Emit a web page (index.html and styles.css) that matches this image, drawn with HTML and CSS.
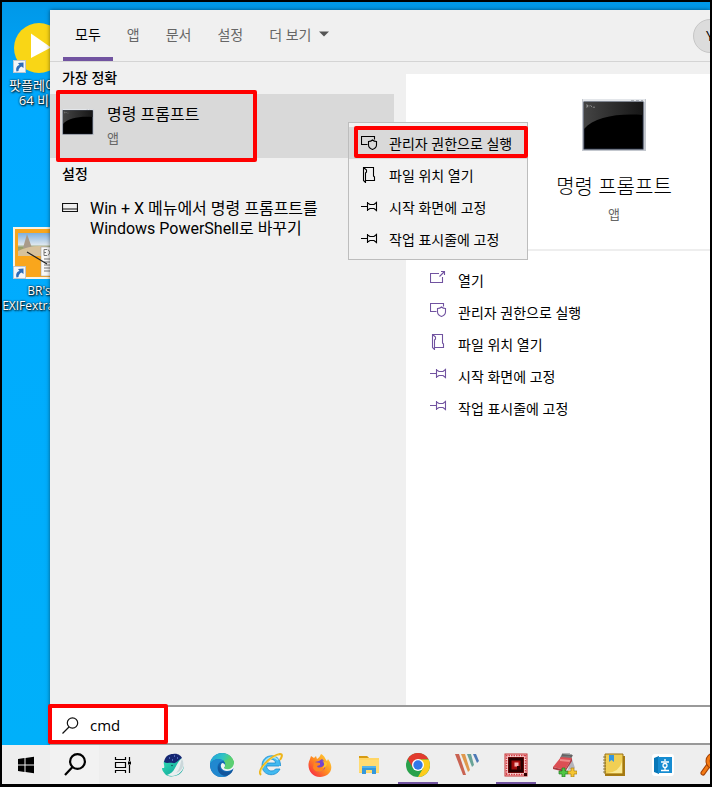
FILE: index.html
```html
<!DOCTYPE html>
<html lang="ko">
<head>
<meta charset="utf-8">
<meta name="viewport" content="width=device-width, initial-scale=1">
<title>cmd</title>
<link rel="stylesheet" href="styles.css">
</head>
<body>
<svg class="defs" aria-hidden="true">
  <defs>
    <linearGradient id="glass" x1="0" y1="0" x2="1" y2="0"><stop offset="0" stop-color="#444"/><stop offset="1" stop-color="#161616"/></linearGradient>
    <symbol id="console" viewBox="0 0 64 52">
      <rect width="64" height="52" fill="#c3c7ce"/>
      <rect x="1" y="0" width="62" height="3" fill="#e3e6ea"/>
      <path d="M49 1.500h3m2 0h3m2 0h2" stroke="#aeb2b8"/>
      <rect x="2" y="3" width="59" height="47" fill="#000" stroke="#20283a"/>
      <path d="M2 3H61V16C36 14 12 18 2 30Z" fill="url(#glass)"/>
      <path d="M4 6h1.500v2H4m3-2v.7m0 .8v.7m1.500-2 1.500 2m1 0h2" stroke="#bbb" stroke-width=".6" fill="none"/>
    </symbol>
    <symbol id="admin" viewBox="0 0 17 16">
      <g fill="none" stroke="currentColor" stroke-width="1.100">
        <path d="M6.500 9.500H.5V1.500H13.500V4.500"/>
        <path d="M11.500 5C10.500 6 9 6.500 7.500 6.500V10C7.500 12.500 9 13.500 11.500 14.500C14 13.500 15.500 12.500 15.500 10V6.500C14 6.500 12.500 6 11.500 5Z"/>
      </g>
    </symbol>
    <symbol id="folder" viewBox="0 0 17 16">
      <g fill="none" stroke="currentColor" stroke-width="1.100">
        <path d="M5 13.500H13.500V10L12.500 9V.5H2.500V13.500L4.500 15.500V6L5.500 5V3L2.500 .5"/>
      </g>
    </symbol>
    <symbol id="pin" viewBox="0 0 17 16">
      <g fill="none" stroke="currentColor" stroke-width="1.100">
        <path d="M0 7.500H6.500M6.500 3V12M6.500 4L9 5.500H13L15.500 3.500V11.500L13 9.500H9L6.500 11"/>
      </g>
    </symbol>
    <symbol id="open" viewBox="0 0 17 16">
      <g fill="none" stroke="currentColor" stroke-width="1.100">
        <path d="M9 3.500H.5V12.500H12.500V7M9.500 6.500L14.500 1.500M11 1.500H14.500V5"/>
      </g>
    </symbol>
    <symbol id="shortcut" viewBox="0 0 13 13">
      <rect x=".5" y=".5" width="12" height="12" fill="#f4f6f8" stroke="#bcc7cf"/>
      <path d="M3.500 11.500C2.500 8 4 5.500 6.500 5L5 3L10.500 2.500V8L8.500 6.500C6.500 7.500 5.500 9 5.500 11Z" fill="#2e6cb8"/>
    </symbol>
  </defs>
</svg>

<div class="screen">
  <main class="workspace">
    <aside class="desktop">
      <a class="shortcut shortcut-player" href="#potplayer">
        <svg class="shortcut-art" viewBox="0 0 52 52" aria-hidden="true">
          <circle cx="26" cy="26" r="25" fill="#f9d616"/>
          <path d="M18 11.500L38 25.500L18 36Z" fill="#fff"/>
          <use href="#shortcut" x="0" y="38" width="13" height="13"/>
        </svg>
        <span>팟플레이어<br>64 비...</span>
      </a>
      <a class="shortcut shortcut-exif" href="#exif">
        <svg class="shortcut-art" viewBox="0 0 52 52" aria-hidden="true">
          <defs><linearGradient id="sky" x1="0" y1="0" x2="0" y2="1"><stop offset="0" stop-color="#7eb0e0"/><stop offset=".5" stop-color="#dce6ee"/><stop offset=".62" stop-color="#93a06b"/><stop offset="1" stop-color="#cda573"/></linearGradient></defs>
          <rect x="0" y="0" width="52" height="52" fill="#f6f3e6"/>
          <rect x="2" y="2" width="50" height="48" fill="#f9a61c"/>
          <rect x="5" y="6" width="47" height="23" fill="url(#sky)"/>
          <path d="M10 21L14 7L19 21Z" fill="#a99b8a"/>
          <path d="M5 24Q20 17 36 20V29H5Z" fill="#d7c29c"/>
          <rect x="28" y="20" width="24" height="29" fill="#f8f8f8" stroke="#999" stroke-width=".5"/>
          <path d="M31 22.500v6m0-6h3m-3 3h2m-2 3h3M35 22.500l4 6m0-6l-4 6M31 32h9m-9 3h9m-9 3h9m-9 3h9m-9 3h9" stroke="#777" stroke-width="1" fill="none"/>
          <path d="M14 25L34 37" stroke="#222" stroke-width="1.200"/>
          <use href="#shortcut" x="0" y="39" width="13" height="13"/>
        </svg>
        <span>BR's<br>EXIFextracter</span>
      </a>
    </aside>

    <section class="search-panel">
      <header class="tabs">
        <button class="tab tab-active" type="button">모두</button>
        <button class="tab" type="button">앱</button>
        <button class="tab" type="button">문서</button>
        <button class="tab" type="button">설정</button>
        <button class="tab tab-more" type="button">더 보기<svg viewBox="0 0 10 6" aria-hidden="true"><path d="M0 .5H10L5 5.500Z" fill="#555"/></svg></button>
        <button class="avatar" type="button">Y</button>
      </header>

      <div class="columns">
        <div class="results">
          <h2>가장 정확</h2>
          <a class="best" href="#cmd">
            <svg class="best-icon" viewBox="0 0 64 52" preserveAspectRatio="none" aria-hidden="true"><use href="#console" width="64" height="52"/></svg>
            <span class="best-text"><span class="best-title">명령 프롬프트</span><span class="kind">앱</span></span>
            <span class="mark mark-best"></span>
          </a>
          <h2>설정</h2>
          <a class="setting" href="#powershell">
            <svg viewBox="0 0 16 10" aria-hidden="true"><path d="M.5 .5H15.500V8.500H.5ZM.5 6H15.500" fill="none" stroke="#111" stroke-width="1.200"/></svg>
            <span>Win + X 메뉴에서 명령 프롬프트를<br>Windows PowerShell로 바꾸기</span>
          </a>
        </div>

        <div class="detail">
          <div class="hero">
            <svg class="hero-icon" viewBox="0 0 64 52" aria-hidden="true"><use href="#console" width="64" height="52"/></svg>
            <h1>명령 프롬프트</h1>
            <span class="kind">앱</span>
          </div>
          <div class="actions">
            <button type="button"><svg><use href="#open"/></svg>열기</button>
            <button type="button"><svg><use href="#admin"/></svg>관리자 권한으로 실행</button>
            <button type="button"><svg><use href="#folder"/></svg>파일 위치 열기</button>
            <button type="button"><svg><use href="#pin"/></svg>시작 화면에 고정</button>
            <button type="button"><svg><use href="#pin"/></svg>작업 표시줄에 고정</button>
          </div>
        </div>

        <div class="menu">
          <button class="menu-active" type="button"><svg><use href="#admin"/></svg>관리자 권한으로 실행<span class="mark mark-menu"></span></button>
          <button type="button"><svg><use href="#folder"/></svg>파일 위치 열기</button>
          <button type="button"><svg><use href="#pin"/></svg>시작 화면에 고정</button>
          <button type="button"><svg><use href="#pin"/></svg>작업 표시줄에 고정</button>
        </div>
      </div>

      <label class="search">
        <svg viewBox="0 0 17 17" aria-hidden="true"><g fill="none" stroke="#111" stroke-width="1.200"><circle cx="10.500" cy="6" r="5.200"/><path d="M7 10L.5 16.500"/></g></svg>
        <input type="text" value="cmd" aria-label="검색">
        <span class="mark mark-search"></span>
      </label>
    </section>
  </main>

  <nav class="taskbar">
    <button type="button" aria-label="시작"><svg viewBox="0 0 24 24"><path d="M4 6L10.500 5V11.500H4ZM11.500 4.900L20 3.700V11.500H11.500ZM4 12.500H10.500V19L4 18ZM11.500 12.500H20V20.300L11.500 19.100Z" fill="#000"/></svg></button>
    <button class="task-search" type="button" aria-label="검색"><svg viewBox="0 0 24 24"><g fill="none" stroke="#000" stroke-width="2.200"><circle cx="14.500" cy="8.500" r="7.400"/><path d="M9.500 14L2 22"/></g></svg></button>
    <button type="button" aria-label="작업 보기"><svg viewBox="0 0 24 24"><path d="M3.500 4V6.500H13.500V4M3.500 20V17.500H13.500V20M3.500 9.500H13.500V14.500H3.500ZM17.500 4V8M17.500 12V20" fill="none" stroke="#000" stroke-width="1.200"/><rect x="16" y="8.500" width="3" height="3"/></svg></button>
    <button type="button" aria-label="Whale"><svg viewBox="0 0 24 24">
      <defs><linearGradient id="whale" x1="0" y1="0" x2="1" y2="1"><stop offset="0" stop-color="#35dfb5"/><stop offset="1" stop-color="#079a95"/></linearGradient></defs>
      <path d="M3 8L20 5C25 11 23 19 17 22C12 24 6 24 4 21C3 19 1 18 1 15L3 15C4 13 2 11 3 8Z" fill="url(#whale)"/>
      <path d="M21 5C17 8 16 12 14 15C12 19 9 21 6 22C15 26 25 18 23 8Z" fill="#e9eff0"/>
      <path d="M21 6C19 9 20 15 15 20C22 18 24 11 21 6Z" fill="#cbd7da"/>
      <path d="M3 9C4 3 8 1 12 1C17 0 20 3 21 5C17 7 15 11 12 10C9 9 6 11 3 9Z" fill="#162773"/>
      <path d="M8 5h1m4-2h1m2 2h1m-6 2h1" stroke="#86a9ff"/><circle cx="11" cy="12.500" r=".8" fill="#124c58"/>
    </svg></button>
    <button type="button" aria-label="Edge"><svg viewBox="0 0 24 24">
      <defs><linearGradient id="edge" x1="0" y1="0" x2="1" y2=".3"><stop offset="0" stop-color="#1f9ee0"/><stop offset=".55" stop-color="#30c3c4"/><stop offset="1" stop-color="#63d94f"/></linearGradient></defs>
      <circle cx="12" cy="12" r="12" fill="#1268b3"/>
      <path d="M0 11C1-1 19-5 24 9C25 15 19 18 14 15C16 13 16 10 14 8C9 5 3 6 0 11Z" fill="url(#edge)"/>
      <path d="M0 11C3 5 11 5 14 8C8 8 5 15 10 20C12 22 14 23 17 23C6 27 0 19 0 11Z" fill="#2188cf"/>
      <path d="M10 11C8 15 12 20 19 19L23 17C21 22 16 24 12 22C7 19 7 14 10 11Z" fill="#12569c"/>
      <path d="M12 10C9 13 12 18 17 18C20 18 22 17 24 15L24 9C23 15 17 17 14 15C16 13 15 10 12 10Z" fill="#eff4f6"/>
      <path d="M14 8C16 10 16 13 14 15C19 18 24 15 24 9L22 5Z" fill="#5bcf73"/>
    </svg></button>
    <button type="button" aria-label="Internet Explorer"><svg viewBox="0 0 24 24">
      <path d="M20 13H7.500C8 19 15 19 16.500 16H21C17 25 3 23 3 12.500C3 0 22-1 21.500 13M8 10H16.500C16 5 9 5 8 10" fill="#43baf0" stroke="#188dd0" stroke-width=".8"/>
      <path d="M5 11C7 4 15 2 19 7" fill="none" stroke="#9ee3ff" stroke-width="1.500"/>
      <path d="M2 22C-3 17 13 2 21 1C24 1 23 4 21 7" fill="none" stroke="#edb51b" stroke-width="2"/>
      <path d="M2 20C1 15 12 4 20 2" fill="none" stroke="#ffe46c" stroke-width=".8"/>
    </svg></button>
    <button type="button" aria-label="Firefox"><svg viewBox="0 0 24 24">
      <defs><linearGradient id="fox" x1="1" y1="0" x2="0" y2="1"><stop offset="0" stop-color="#ffe13b"/><stop offset=".5" stop-color="#ff8b20"/><stop offset="1" stop-color="#f5154e"/></linearGradient></defs>
      <path d="M2 6L3 3L6 5L8 3L9 6C11 5 12 3 13 1C17 3 17 6 19 8L20 6C28 17 20 24 12 24C2 24-2 13 2 6Z" fill="url(#fox)"/>
      <path d="M7 9L11 8L14 6C18 9 19 16 14 18C9 20 6 16 6 13Z" fill="#7446cf"/>
      <path d="M6 9L12 10L12 12L9 13C10 16 15 14 16 12C18 20 8 21 5 15Z" fill="#ff8520"/>
      <path d="M13 7C17 9 17 13 14 15C18 15 19 12 19 10Z" fill="#ffc52c"/>
    </svg></button>
    <button type="button" aria-label="파일 탐색기"><svg viewBox="0 0 24 24">
      <path d="M2 3H10L12 5H22V20H2Z" fill="#ffd666"/><path d="M2 3H10L12 5H2Z" fill="#d79b12"/><path d="M2 7H22V19H2Z" fill="#ffdc73"/>
      <path d="M5 13H19V21H15V17H9V21H5Z" fill="#3598dc"/><path d="M5 13H19V15H5Z" fill="#53b4ed"/>
    </svg></button>
    <button class="running" type="button" aria-label="Chrome"><svg viewBox="0 0 24 24">
      <circle cx="12" cy="12" r="12" fill="#29a14c"/><path d="M1.600 6A12 12 0 0 1 22.400 6L12 6.500L7 15Z" fill="#e23b2e"/><path d="M12 6.500H22.600A12 12 0 0 1 12 24L17.200 15Z" fill="#fdcc1d"/><circle cx="12" cy="12" r="6" fill="#fff"/><circle cx="12" cy="12" r="4.700" fill="#3077e8"/>
    </svg></button>
    <button type="button" aria-label="편집기"><svg viewBox="0 0 24 24">
      <path d="M0 1H4L11 22H8Z" fill="#c96352"/><path d="M6 1H10L15 17L13 19Z" fill="#df984d"/><path d="M12 1H16L19 12L17 14Z" fill="#69a397"/><path d="M18 1H21L24 8L22 10Z" fill="#4d79b5"/>
    </svg></button>
    <button class="running" type="button" aria-label="캡처"><svg viewBox="0 0 24 24">
      <rect x="1" y="1" width="22" height="22" fill="#f7d2d2" stroke="#c83232"/>
      <path d="M2 2.500H22M2 21.500H22M2.500 2V22M21.500 2V22" stroke="#d5404a" stroke-width="1.500" stroke-dasharray="1.500 1"/>
      <path d="M4 4H20V20H4Z" fill="#a00c0c"/><path d="M6 6H18V18H6Z" fill="none" stroke="#260000" stroke-width="3"/><path d="M10 9H15V14H10Z" fill="#f6b4b4" stroke="#b01010"/><path d="M13 13H16V17H13Z" fill="#340000"/><rect x="20" y="20" width="3" height="3" fill="#300"/>
    </svg></button>
    <button type="button" aria-label="메모"><svg viewBox="0 0 24 24">
      <path d="M18 3L22 15L15 17Z" fill="#b4b4bb"/><path d="M9 1L20 2L18 6L7 5Z" fill="#777"/><path d="M8 4L19 5L12 17L0 14Z" fill="#dc4f54"/><path d="M7 7L17 8" stroke="#ee8b89" stroke-width="2"/><path d="M0 14L12 17L19 5V8L12 19L0 16Z" fill="#ac3940"/><path d="M10 0v3m2-3v3m2-3v3m2-3v3m2-2v3" stroke="#444" stroke-width=".7"/>
      <path d="M9 15H12V18H15V21H12V24H9V21H6V18H9Z" fill="#50c744" stroke="#247b22" stroke-width=".7"/><path d="M18 15H21V18H24V21H21V24H18V21H15V18H18Z" fill="#f5c532" stroke="#aa8017" stroke-width=".7"/>
    </svg></button>
    <button type="button" aria-label="노트"><svg viewBox="0 0 24 24">
      <path d="M3 3H23V23H3Z" fill="#a77b13"/><path d="M3 1H21V21H3Z" fill="#f1cf54" stroke="#9b7314"/><path d="M5 20Q18 19 20 8V20Z" fill="#fae996"/><path d="M7 2H12V9L9.500 7L7 9Z" fill="#3696df"/><path d="M1 4h3m-3 3h3m-3 3h3m-3 3h3m-3 3h3m-3 3h3" stroke="#7a621c" stroke-width=".8"/>
    </svg></button>
    <button type="button" aria-label="한글 사전"><svg viewBox="0 0 24 24">
      <rect x="1" y="1" width="22" height="22" rx="3" fill="#fff"/><path d="M3 5L8 3V21L3 19Z" fill="#0877b8"/><path d="M7 4H21V20H7Z" fill="#168cd1"/><path d="M14 6V8M10 9H18M14 15V17M10 17.500H18" stroke="#fff" stroke-width="1.300"/><circle cx="14" cy="12.500" r="2" fill="none" stroke="#fff" stroke-width="1.300"/>
    </svg></button>
    <button type="button" aria-label="찾기"><svg viewBox="0 0 24 24">
      <path d="M8 13L3 20" stroke="#a34207" stroke-width="5" stroke-linecap="round"/><path d="M8 13L3 20" stroke="#f47a13" stroke-width="3" stroke-linecap="round"/><circle cx="14" cy="8" r="6" fill="#fff" stroke="#a34207" stroke-width="5"/><circle cx="14" cy="8" r="6" fill="none" stroke="#f47a13" stroke-width="3"/>
    </svg></button>
  </nav>
</div>
</body>
</html>
```
FILE: styles.css
```css
* { box-sizing: border-box; }

body {
  margin: 0;
  color: #000;
  font-family: "Open Sans", "Noto Sans CJK KR", sans-serif;
  font-size: 14px;
}

button {
  border: 0;
  padding: 0;
  background: none;
  color: inherit;
  font: inherit;
  text-align: left;
  white-space: nowrap;
}

a { color: inherit; text-decoration: none; }
h1, h2 { margin: 0; font-weight: 400; }
svg { display: block; flex: none; }
.defs { position: absolute; width: 0; height: 0; }

.screen {
  display: flex;
  flex-direction: column;
  min-height: 100vh;
  border: 2px solid #000;
  border-bottom-width: 3px;
  overflow: hidden;
}

.workspace {
  flex: 1;
  display: flex;
  padding-top: 8px;
  background: linear-gradient(#0098e8, #00aaff 100px, #00b0fa);
}

/* Desktop */
.desktop {
  width: 48px;
  overflow: hidden;
  padding: 12px 0 0 1px;
}

.shortcut {
  display: flex;
  flex-direction: column;
  align-items: center;
  gap: 4px;
  width: 72px;
  color: #fff;
  font-size: 12px;
  line-height: 15px;
  text-align: center;
  white-space: nowrap;
  text-shadow: 1px 1px 2px #000, 0 0 2px #000;
}

.shortcut-player { font-size: 13px; }
.shortcut-exif { margin-top: 119px; }
.shortcut-art { width: 52px; height: 52px; }

/* Search panel */
.search-panel {
  flex: 1;
  min-width: 0;
  display: flex;
  flex-direction: column;
  background: #f0f0f0;
  box-shadow: 0 0 4px #00000080;
}

.tabs {
  display: flex;
  align-items: stretch;
  gap: 2px;
  height: 52px;
  padding-left: 13px;
  border-bottom: 1px solid #d4d4d4;
  overflow: hidden;
  color: #666;
}

.tab {
  padding: 0 12px;
  border-bottom: 4px solid transparent;
}

.tab-active { border-color: #7153a0; color: #000; }
.tab-more { display: flex; align-items: center; gap: 8px; }
.tab-more svg { width: 10px; height: 6px; }

.avatar {
  flex: none;
  align-self: center;
  width: 34px;
  height: 34px;
  margin: 0 -17px 0 auto;
  border: 1px solid #c6c6c6;
  border-radius: 50%;
  background: #dcdcdc;
  color: #000;
  text-align: center;
}

.columns {
  position: relative;
  flex: 1;
  display: grid;
  grid-template-columns: 356px minmax(0, 1fr);
}

.results { padding-right: 12px; }

.results h2 {
  padding-left: 12px;
  font-size: 14px;
  font-weight: 500;
  line-height: 32px;
}

.best {
  position: relative;
  display: flex;
  align-items: center;
  gap: 13px;
  height: 64px;
  padding-left: 12px;
  background: #d9d9d9;
}

.best-icon { width: 32px; height: 26px; margin-bottom: 8px; }
.best-text { display: flex; flex-direction: column; }
.best-title { font-size: 16px; line-height: 24px; }
.kind { color: #666; font-size: 13px; line-height: 24px; }

.setting {
  display: flex;
  gap: 12px;
  padding: 9px 0 0 12px;
  font-family: Roboto, "Noto Sans CJK KR", sans-serif;
  font-size: 16px;
  line-height: 20px;
}

.setting svg { width: 16px; height: 10px; margin-top: 4px; }

.detail { margin-top: 12px; background: #fff; }

.hero {
  display: flex;
  flex-direction: column;
  align-items: center;
  padding: 25px 0 23px;
  margin-right: -112px;
  border-bottom: 2px solid #eee;
}

.hero-icon { width: 64px; height: 52px; }
.hero h1 { margin-top: 21px; font-size: 20px; font-weight: 300; line-height: 30px; }

.actions { display: flex; flex-direction: column; padding: 13px 0 0 24px; }

.actions button,
.menu button {
  display: flex;
  align-items: center;
  height: 32px;
  gap: 11px;
}

.actions svg,
.menu svg { width: 17px; height: 16px; }
.actions svg { color: #7153a0; margin-bottom: 4px; }

/* Context menu */
.menu {
  position: absolute;
  top: 60px;
  left: 298px;
  width: 180px;
  padding: 4px 0;
  border: 1px solid #bdbdbd;
  background: #f2f2f2;
}

.menu button { position: relative; width: 100%; padding-left: 12px; }
.menu .menu-active { background: #d9d9d9; }

/* Red highlight frames */
.mark {
  position: absolute;
  border: 4px solid #f00;
  border-radius: 2px;
  pointer-events: none;
}

.mark-best { top: -4px; left: 6px; width: 201px; height: 72px; }
.mark-menu { inset: -1px -1px 1px 5px; }
.mark-search { top: -3px; left: -2px; width: 120px; height: 40px; }

/* Search box */
.search {
  position: relative;
  display: flex;
  align-items: center;
  gap: 11px;
  height: 40px;
  padding-left: 12px;
  border: solid #999;
  border-width: 2px 0;
  background: #fff;
}

.search svg { width: 17px; height: 17px; }

.search input {
  flex: 1;
  min-width: 0;
  border: 0;
  padding: 0;
  outline: 0;
  background: none;
  color: #000;
  font: inherit;
  font-size: 15px;
}

/* Taskbar */
.taskbar {
  display: flex;
  height: 39px;
  background: #eee;
  overflow: hidden;
}

.taskbar button {
  flex: none;
  display: flex;
  align-items: center;
  justify-content: center;
  width: 49px;
}

.taskbar button:first-child { width: 48px; }
.taskbar svg { width: 24px; height: 24px; }
.taskbar .task-search { background: #f2f2f2; }
.taskbar .running { background: linear-gradient(#7153a0, #7153a0) center bottom / 40px 2px no-repeat; }
```
